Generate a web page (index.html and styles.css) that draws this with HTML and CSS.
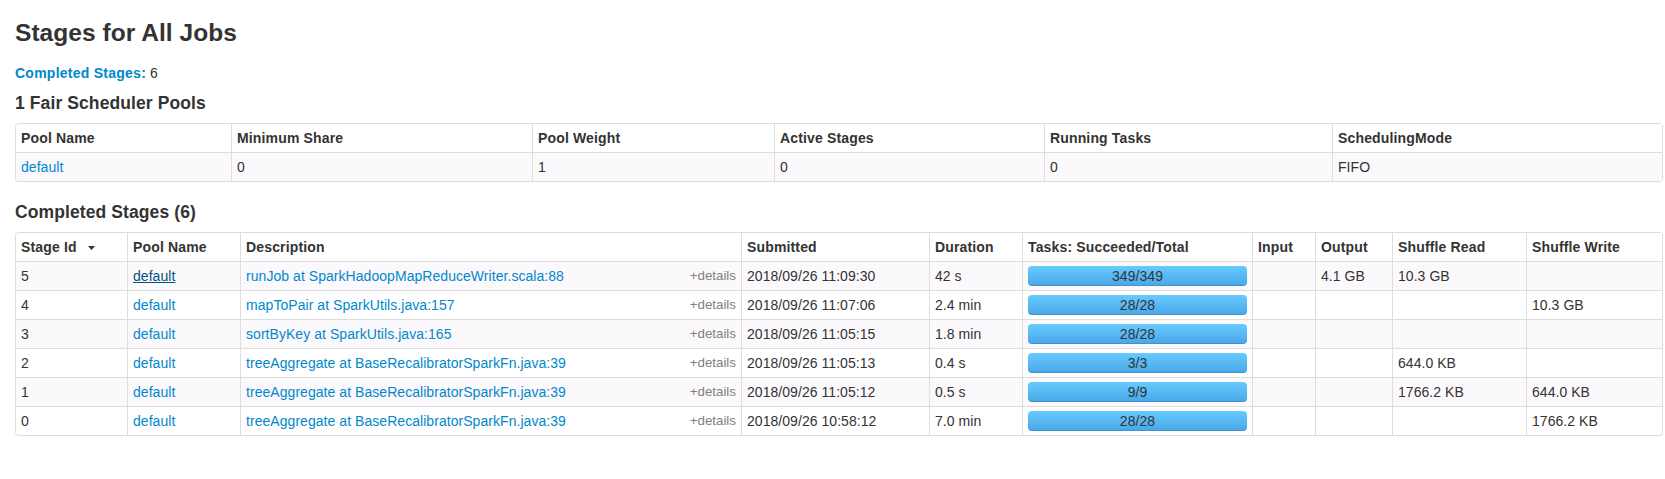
FILE: index.html
```html
<!DOCTYPE html>
<html>
<head>
<meta charset="utf-8">
<title>Stages for All Jobs</title>
<link rel="stylesheet" href="styles.css">
</head>
<body>
<div class="page">
  <h3 class="title">Stages for All Jobs</h3>
  <div class="summary"><a class="lnk" href="#completed"><strong>Completed Stages:</strong></a> 6</div>

  <h4 class="section">1 Fair Scheduler Pools</h4>
  <table class="grid pools">
    <colgroup>
      <col class="p1"><col class="p2"><col class="p3"><col class="p4"><col class="p5"><col class="p6">
    </colgroup>
    <thead>
      <tr><th>Pool Name</th><th>Minimum Share</th><th>Pool Weight</th><th>Active Stages</th><th>Running Tasks</th><th>SchedulingMode</th></tr>
    </thead>
    <tbody>
      <tr class="odd"><td><a class="lnk" href="#">default</a></td><td>0</td><td>1</td><td>0</td><td>0</td><td>FIFO</td></tr>
    </tbody>
  </table>

  <h4 class="section" id="completed">Completed Stages (6)</h4>
  <table class="grid stages">
    <colgroup>
      <col class="s1"><col class="s2"><col class="s3"><col class="s4"><col class="s5"><col class="s6"><col class="s7"><col class="s8"><col class="s9"><col class="s10">
    </colgroup>
    <thead>
      <tr>
        <th>Stage Id <svg class="sort" width="7" height="4" viewBox="0 0 7 4"><path d="M0 0H7L3.5 4Z" fill="#333"/></svg></th>
        <th>Pool Name</th><th>Description</th><th>Submitted</th><th>Duration</th><th>Tasks: Succeeded/Total</th><th>Input</th><th>Output</th><th>Shuffle Read</th><th>Shuffle Write</th>
      </tr>
    </thead>
    <tbody>
      <tr class="odd">
        <td>5</td><td><a class="lnk hover" href="#">default</a></td>
        <td><span class="details">+details</span><a class="lnk" href="#">runJob at SparkHadoopMapReduceWriter.scala:88</a></td>
        <td>2018/09/26 11:09:30</td><td>42 s</td>
        <td><div class="progress"><span>349/349</span></div></td>
        <td></td><td>4.1 GB</td><td>10.3 GB</td><td></td>
      </tr>
      <tr>
        <td>4</td><td><a class="lnk" href="#">default</a></td>
        <td><span class="details">+details</span><a class="lnk" href="#">mapToPair at SparkUtils.java:157</a></td>
        <td>2018/09/26 11:07:06</td><td>2.4 min</td>
        <td><div class="progress"><span>28/28</span></div></td>
        <td></td><td></td><td></td><td>10.3 GB</td>
      </tr>
      <tr class="odd">
        <td>3</td><td><a class="lnk" href="#">default</a></td>
        <td><span class="details">+details</span><a class="lnk" href="#">sortByKey at SparkUtils.java:165</a></td>
        <td>2018/09/26 11:05:15</td><td>1.8 min</td>
        <td><div class="progress"><span>28/28</span></div></td>
        <td></td><td></td><td></td><td></td>
      </tr>
      <tr>
        <td>2</td><td><a class="lnk" href="#">default</a></td>
        <td><span class="details">+details</span><a class="lnk" href="#">treeAggregate at BaseRecalibratorSparkFn.java:39</a></td>
        <td>2018/09/26 11:05:13</td><td>0.4 s</td>
        <td><div class="progress"><span>3/3</span></div></td>
        <td></td><td></td><td>644.0 KB</td><td></td>
      </tr>
      <tr class="odd">
        <td>1</td><td><a class="lnk" href="#">default</a></td>
        <td><span class="details">+details</span><a class="lnk" href="#">treeAggregate at BaseRecalibratorSparkFn.java:39</a></td>
        <td>2018/09/26 11:05:12</td><td>0.5 s</td>
        <td><div class="progress"><span>9/9</span></div></td>
        <td></td><td></td><td>1766.2 KB</td><td>644.0 KB</td>
      </tr>
      <tr>
        <td>0</td><td><a class="lnk" href="#">default</a></td>
        <td><span class="details">+details</span><a class="lnk" href="#">treeAggregate at BaseRecalibratorSparkFn.java:39</a></td>
        <td>2018/09/26 10:58:12</td><td>7.0 min</td>
        <td><div class="progress"><span>28/28</span></div></td>
        <td></td><td></td><td></td><td>1766.2 KB</td>
      </tr>
    </tbody>
  </table>
</div>
</body>
</html>
```

FILE: styles.css
```css
html, body {
  margin: 0;
  padding: 0;
  background: #fff;
}

body {
  font-family: "Liberation Sans", Arial, Helvetica, sans-serif;
  font-size: 14px;
  line-height: 20px;
  color: #333;
}

.page {
  padding: 0 2px 0 15px;
  width: 1648px;
}

.title {
  margin: 13px 0 0 0;
  font-size: 24.5px;
  line-height: 40px;
  font-weight: bold;
  letter-spacing: 0.05px;
  color: #333;
}

.summary {
  margin-top: 10px;
  height: 20px;
}

.summary strong {
  letter-spacing: 0.25px;
}

.lnk {
  color: #0088cc;
  text-decoration: none;
}

.lnk.hover {
  color: #005580;
  text-decoration: underline;
}

.section {
  margin: 10px 0;
  font-size: 17.5px;
  line-height: 20px;
  font-weight: bold;
  letter-spacing: 0.1px;
  color: #333;
}

.grid {
  width: 100%;
  table-layout: fixed;
  border-collapse: separate;
  border-spacing: 0;
  border: 1px solid #ddd;
  border-left: 0;
  border-radius: 4px;
  margin-bottom: 20px;
}

.grid th,
.grid td {
  padding: 4px 5px;
  line-height: 20px;
  text-align: left;
  vertical-align: top;
  border-left: 1px solid #ddd;
  border-top: 1px solid #ddd;
  white-space: nowrap;
  overflow: hidden;
}

.grid td {
  letter-spacing: 0.05px;
}

.grid thead tr:first-child th {
  border-top: 0;
}

.grid th {
  font-weight: bold;
  letter-spacing: 0.15px;
  vertical-align: bottom;
  background: #fff;
}

.grid thead tr:first-child th:first-child {
  border-top-left-radius: 4px;
}

.grid tbody tr:last-child td:first-child {
  border-bottom-left-radius: 4px;
}

.grid tr.odd td {
  background: #fcf9fc;
}

.sort {
  margin-left: 7px;
  vertical-align: 2px;
}

.pools .p1 { width: 216px; }
.pools .p2 { width: 301px; }
.pools .p3 { width: 242px; }
.pools .p4 { width: 270px; }
.pools .p5 { width: 288px; }
.pools .p6 { width: 330px; }

.stages .s1 { width: 112px; }
.stages .s2 { width: 113px; }
.stages .s3 { width: 501px; }
.stages .s4 { width: 188px; }
.stages .s5 { width: 93px; }
.stages .s6 { width: 230px; }
.stages .s7 { width: 63px; }
.stages .s8 { width: 77px; }
.stages .s9 { width: 134px; }
.stages .s10 { width: 136px; }

.details {
  float: right;
  font-size: 10pt;
  letter-spacing: 0;
  color: grey;
}

.progress {
  position: relative;
  height: 20px;
  border-radius: 4px;
  background-color: #4fb3f0;
  background-image: linear-gradient(to bottom, #66cbff, #4aa6e8);
  box-shadow: inset 0 -1px 0 rgba(0, 0, 0, 0.12);
  text-align: center;
  line-height: 20px;
  color: #333;
}

.progress span {
  display: block;
  width: 100%;
}
```
